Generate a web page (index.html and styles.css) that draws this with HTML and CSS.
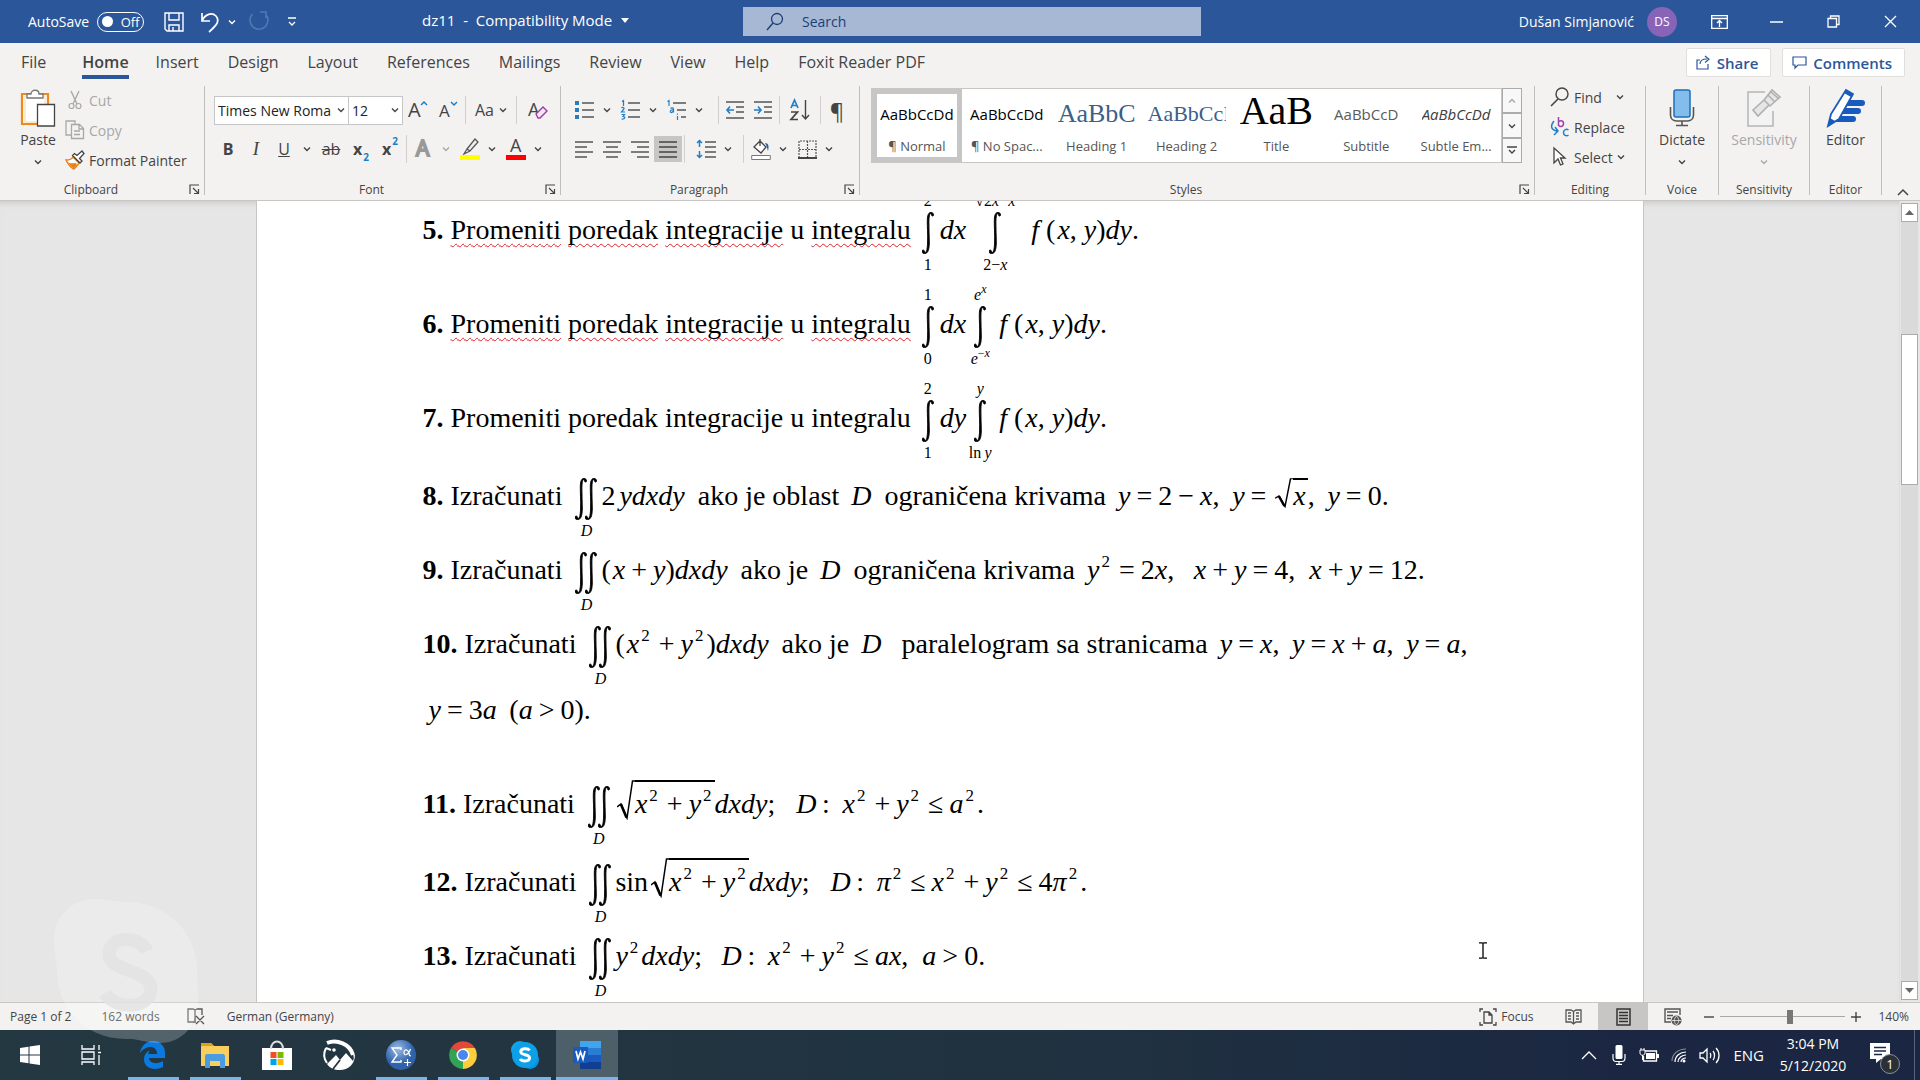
FILE: index.html
```html
<!DOCTYPE html>
<html lang="en">
<head>
<meta charset="utf-8">
<title>dz11 - Compatibility Mode - Word</title>
<link rel="stylesheet" href="styles.css">
</head>
<body>
<svg class="defs" aria-hidden="true">
  <symbol id="chev" viewBox="0 0 8 8"><path d="M1 2.500l3 3 3-3" fill="none" stroke="currentColor" stroke-width="1.400"/></symbol>
  <symbol id="launch" viewBox="0 0 11 11"><path d="M1 10V1h9M4 4l5 5M9.500 5v4.500H5" fill="none" stroke="currentColor" stroke-width="1.200"/></symbol>
  <symbol id="int" viewBox="0 0 12 42"><path d="M11.500 3.200C11.500 1.200 10.500.400 9 .400 6.500.400 5.400 3 5.300 8.500 5.200 15 5.900 22 5.600 30c-.2 6-.8 10.500-2.400 10.500-.7 0-.5-2.500-2-2.500-1 0-1.200.8-1.200 1.600 0 1.400 1.200 2 2.600 2 3.200 0 4.600-3.600 4.700-10.600C7.400 24 6.700 17 6.900 10 7 4.500 7.600 1.400 8.800 1.400c.7 0 .4 2.600 1.700 2.600.6 0 1-.3 1-.8z" stroke="#000" stroke-width=".9"/></symbol>
  <symbol id="iint" viewBox="0 0 22 42"><use href="#int" width="12" height="42"/><use href="#int" x="10" width="12" height="42"/></symbol>
  <symbol id="root" viewBox="0 0 18 40" preserveAspectRatio="none"><path d="M0 27l4-3 6 14L15.500 1H18" fill="none" stroke="#000" stroke-width="1.500"/><path d="M4 24.500l5.500 13" stroke="#000" stroke-width="2.600"/></symbol>
</svg>

<div class="app">
<header class="titlebar">
  <div class="quick">
    <label class="autosave">AutoSave <button class="toggle" aria-label="AutoSave off"><span class="knob"></span>Off</button></label>
    <button class="tb save" aria-label="Save"><svg width="20" height="20" viewBox="0 0 20 20"><path d="M1 1h18v18H3l-2-2zM5 1v7h10V1M5 19v-6h10v6M9 15v4" fill="none" stroke="#fff" stroke-width="1.400"/></svg></button>
    <button class="tb undo" aria-label="Undo"><svg width="20" height="22" viewBox="0 0 20 22"><path d="M2 2v8h8M2 10C5 3 12 1 16 5c4 5 1 9-7 16" fill="none" stroke="#fff" stroke-width="1.700"/></svg><svg class="c8"><use href="#chev"/></svg></button>
    <button class="tb redo" aria-label="Repeat"><svg width="22" height="22" viewBox="0 0 22 22"><path d="M13 1h6v6M18.500 3a9 9 0 1 1-13 0" fill="none" stroke="#5078b4" stroke-width="1.600"/></svg></button>
    <button class="tb" aria-label="Customize"><svg width="10" height="10" viewBox="0 0 10 10"><path d="M1 1h8M2 5l3 3 3-3" fill="none" stroke="#fff" stroke-width="1.300"/></svg></button>
  </div>
  <div class="doctitle"><span>dz11&nbsp; -&nbsp; Compatibility Mode</span><svg width="8" height="5" viewBox="0 0 8 5"><path d="M0 0h8L4 5z" fill="#fff"/></svg></div>
  <label class="search"><svg width="18" height="20" viewBox="0 0 18 20"><circle cx="11" cy="7" r="5.500" fill="none" stroke="#1d3f77" stroke-width="1.300"/><path d="M7 11L1 18" stroke="#1d3f77" stroke-width="1.400"/></svg><input type="text" placeholder="Search" aria-label="Search"></label>
  <div class="account">
    <span>Dušan Simjanović</span><span class="avatar">DS</span>
    <button class="win" aria-label="Ribbon display"><svg width="17" height="14" viewBox="0 0 17 14"><path d="M.7.700h15.600v12.600H.7zM.7 3.500h15.600M8.500 12V6M6 8l2.500-2.500L11 8" fill="none" stroke="#fff" stroke-width="1.300"/></svg></button>
    <button class="win" aria-label="Minimize"><svg width="13" height="2"><path d="M0 1h13" stroke="#fff" stroke-width="1.500"/></svg></button>
    <button class="win" aria-label="Restore"><svg width="13" height="13" viewBox="0 0 13 13"><path d="M1 3.500h8.500V12H1zM3.500 3.500V1H12v8.500H9.500" fill="none" stroke="#fff" stroke-width="1.300"/></svg></button>
    <button class="win" aria-label="Close"><svg width="13" height="13" viewBox="0 0 13 13"><path d="M1 1l11 11M12 1L1 12" stroke="#fff" stroke-width="1.300"/></svg></button>
  </div>
</header>

<nav class="tabs">
  <a href="#">File</a><a href="#" class="on">Home</a><a href="#">Insert</a><a href="#">Design</a><a href="#">Layout</a><a href="#">References</a><a href="#">Mailings</a><a href="#">Review</a><a href="#">View</a><a href="#">Help</a><a href="#">Foxit Reader PDF</a>
  <div class="actions">
    <button><svg width="15" height="15" viewBox="0 0 15 15"><path d="M4 5H1v9h11V9M4 9c0-4 3-5 7-5M9 1l4 3.200L9 7.500" fill="none" stroke="#2b579a" stroke-width="1.200"/></svg>Share</button>
    <button><svg width="15" height="13" viewBox="0 0 15 13"><path d="M1 1h13v8H6l-3 3V9H1z" fill="none" stroke="#2b579a" stroke-width="1.200"/></svg>Comments</button>
  </div>
</nav>

<section class="ribbon">
  <div class="group">
    <div class="body clip">
      <button class="big paste"><svg width="36" height="38" viewBox="0 0 36 38"><path d="M2 5h26v30H2z" fill="#fafafa" stroke="#ee8a1d" stroke-width="2.200"/><path d="M5 7h20v26H5z" fill="#fff" stroke="#fbd9a0"/><path d="M7 9V5h4c0-5 8-5 8 0h4v4z" fill="#fff" stroke="#777" stroke-width="1.300"/><path d="M17.500 15.500h17V37h-17z" fill="#fff" stroke="#444" stroke-width="1.300"/></svg><span>Paste</span><svg class="c8"><use href="#chev"/></svg></button>
      <div class="stack">
        <button class="dim"><svg width="20" height="20" viewBox="0 0 20 20"><path d="M6 1l6 13M14 1L8 14" stroke="#a8a8a8" stroke-width="1.400"/><circle cx="6.500" cy="16" r="2.500" fill="none" stroke="#a8a8a8" stroke-width="1.200"/><circle cx="13.500" cy="16" r="2.500" fill="none" stroke="#a8a8a8" stroke-width="1.200"/></svg>Cut</button>
        <button class="dim"><svg width="20" height="20" viewBox="0 0 20 20"><path d="M6 15H1V1h9v3M6.500 4.500h8l4 4v10h-12zM14 5v4h4M9 11h6M9 14.500h6" fill="none" stroke="#a8a8a8" stroke-width="1.300"/></svg>Copy</button>
        <button><svg width="20" height="20" viewBox="0 0 20 20"><path d="M1 10c3 0 6-1 7-3l6 6c-1 2-3 4-5 6-3-1-6-5-8-9z" fill="#fff" stroke="#e8811a" stroke-width="1.500"/><path d="M3 12.500c3 1 5 1 8 .5l1 2-3 3.500c-2-1-4-3-6-6z" fill="#e8811a"/><path d="M7.500 5.500l7.500 7.500 2-2-2.500-2.500L19 3.500 17 1l-5 4.500-2.500-2z" fill="#fff" stroke="#444" stroke-width="1.300"/></svg>Format Painter</button>
      </div>
    </div>
    <div class="cap has-la">Clipboard<svg class="la"><use href="#launch"/></svg></div>
  </div>

  <div class="group">
    <div class="body rows">
      <div class="row">
        <div class="combo fontname"><input value="Times New Roma" aria-label="Font"><svg class="c8"><use href="#chev"/></svg></div>
        <div class="combo fontsize"><input value="12" aria-label="Font size"><svg class="c8"><use href="#chev"/></svg></div>
        <button class="cell w30" aria-label="Grow font"><svg width="20" height="20" viewBox="0 0 20 20"><text x="0" y="17" font-size="20">A</text><path d="M13 5l3-3 3 3" fill="none" stroke="#1e7fc8" stroke-width="1.500"/></svg></button>
        <button class="cell w30" aria-label="Shrink font"><svg width="20" height="20" viewBox="0 0 20 20"><text x="1" y="17" font-size="17">A</text><path d="M13 2l3 3 3-3" fill="none" stroke="#1e7fc8" stroke-width="1.500"/></svg></button>
        <span class="vs"></span>
        <button class="cell w46 case">Aa<svg class="c8"><use href="#chev"/></svg></button>
        <span class="vs"></span>
        <button class="cell w38" aria-label="Clear formatting"><svg width="22" height="22" viewBox="0 0 22 22"><text x="1" y="17" font-size="18">A</text><path d="M9 15l7-7 4 4-7 7h-2z" fill="#f7e6f7" stroke="#9a3d9e" stroke-width="1.400"/></svg></button>
      </div>
      <div class="row r2">
        <button class="cell w28"><b>B</b></button><button class="cell w28 it">I</button><button class="cell w28"><u>U</u></button><button class="cell w18" aria-label="Underline style"><svg class="c8"><use href="#chev"/></svg></button>
        <button class="cell w30"><s>ab</s></button><button class="cell w30 script"><b>x</b><sub>2</sub></button><button class="cell w28 script"><b>x</b><sup>2</sup></button>
        <span class="vs"></span>
        <button class="cell w46 dim" aria-label="Text effects"><svg width="20" height="22" viewBox="0 0 20 22"><text class="hollow" x="2" y="18" font-size="21">A</text></svg><svg class="c8"><use href="#chev"/></svg></button>
        <button class="cell w46" aria-label="Highlight"><svg width="20" height="24" viewBox="0 0 20 24"><path d="M7 12L15 2l3 3-8 9zM7 12l-3 5 6-3" fill="#eee" stroke="#555" stroke-width="1.300"/><path d="M0 18h20v5H0z" fill="#ff0"/></svg><svg class="c8"><use href="#chev"/></svg></button>
        <button class="cell w46" aria-label="Font color"><svg width="20" height="24" viewBox="0 0 20 24"><text x="4" y="15" font-size="18">A</text><path d="M0 18h20v5H0z" fill="red"/></svg><svg class="c8"><use href="#chev"/></svg></button>
      </div>
    </div>
    <div class="cap has-la">Font<svg class="la"><use href="#launch"/></svg></div>
  </div>

  <div class="group">
    <div class="body rows">
      <div class="row">
        <button class="cell w46" aria-label="Bullets"><svg width="20" height="20" viewBox="0 0 20 20"><path d="M7 3h12M7 10h12M7 17h12" stroke="#555" stroke-width="1.500"/><path d="M0 1h4v4H0zM0 8h4v4H0zM0 15h4v4H0z" fill="#2b7cb8"/></svg><svg class="c8"><use href="#chev"/></svg></button>
        <button class="cell w46" aria-label="Numbering"><svg width="20" height="20" viewBox="0 0 20 20"><path d="M7 3h12M7 10h12M7 17h12" stroke="#555" stroke-width="1.500"/><path d="M1 1.500L2.500.500V6M.5 8c1-1 3-.5 2.500 1L.5 12H4M.5 14.500h3L2 16.500c3 0 2 3-1.500 2.500" fill="none" stroke="#1e7fc8" stroke-width="1.200"/></svg><svg class="c8"><use href="#chev"/></svg></button>
        <button class="cell w54 left" aria-label="Multilevel list"><svg width="20" height="20" viewBox="0 0 20 20"><path d="M6 3h13M10 10h9M14 17h5" stroke="#555" stroke-width="1.500"/><path d="M.5 1.500L2 .500V6M3.500 8.500c1-1 3-.7 3 .5v3.500M6.500 10c-4-.5-4 3-1.500 2.500L6.500 11M10.500 16v4M10.500 13.500v1.300" fill="none" stroke="#1e7fc8" stroke-width="1.200"/></svg><svg class="c8"><use href="#chev"/></svg></button>
        <span class="vs"></span>
        <button class="cell w28" aria-label="Decrease indent"><svg width="18" height="18" viewBox="0 0 18 18"><path d="M0 1h18M10 6h8M10 11h8M0 17h18" stroke="#555" stroke-width="1.500"/><path d="M8 9H1M4 5.500L1 9l3 3.500" fill="none" stroke="#1e7fc8" stroke-width="1.600"/></svg></button>
        <button class="cell w28" aria-label="Increase indent"><svg width="18" height="18" viewBox="0 0 18 18"><path d="M0 1h18M10 6h8M10 11h8M0 17h18" stroke="#555" stroke-width="1.500"/><path d="M0 9h7M4 5.500L7 9l-3 3.500" fill="none" stroke="#1e7fc8" stroke-width="1.600"/></svg></button>
        <span class="vs"></span>
        <button class="cell w36" aria-label="Sort"><svg width="20" height="22" viewBox="0 0 20 22"><path d="M1 9L4.500 1 8 9M2 6.500h5" fill="none" stroke="#1e7fc8" stroke-width="1.700"/><path d="M1 13h6.500L1 20.500h7" fill="none" stroke="#444" stroke-width="1.700"/><path d="M15.500 1v19M12 16l3.500 4 3.500-4" fill="none" stroke="#444" stroke-width="1.400"/></svg></button>
        <span class="vs"></span>
        <button class="cell w28 pil">¶</button>
      </div>
      <div class="row r2">
        <button class="cell w28" aria-label="Align left"><svg width="18" height="17" viewBox="0 0 18 17"><path d="M0 1h18M0 6h12M0 11h18M0 16h12" stroke="#555" stroke-width="1.500"/></svg></button>
        <button class="cell w28" aria-label="Center"><svg width="18" height="17" viewBox="0 0 18 17"><path d="M0 1h18M3 6h12M0 11h18M3 16h12" stroke="#555" stroke-width="1.500"/></svg></button>
        <button class="cell w28" aria-label="Align right"><svg width="18" height="17" viewBox="0 0 18 17"><path d="M0 1h18M6 6h12M0 11h18M6 16h12" stroke="#555" stroke-width="1.500"/></svg></button>
        <button class="cell w28 pressed" aria-label="Justify"><svg width="18" height="17" viewBox="0 0 18 17"><path d="M0 1h18M0 6h18M0 11h18M0 16h18" stroke="#444" stroke-width="1.500"/></svg></button>
        <span class="vs"></span>
        <button class="cell w54" aria-label="Line spacing"><svg width="20" height="18" viewBox="0 0 20 18"><path d="M9 2h11M9 7h11M9 12h11M9 17h11" stroke="#555" stroke-width="1.500"/><path d="M3.500 0v7M1 3l2.500-2.500L6 3M3.500 11v7M1 15l2.500 2.500L6 15" fill="none" stroke="#1e7fc8" stroke-width="1.500"/></svg><svg class="c8"><use href="#chev"/></svg></button>
        <span class="vs"></span>
        <button class="cell w46" aria-label="Shading"><svg width="20" height="22" viewBox="0 0 20 22"><path d="M3 9l6-6 6 6-5 6zM9 8V1" fill="#fff" stroke="#444" stroke-width="1.300"/><path d="M14 5c4 0 4 4 3 8-1-3-1-5-3-8z" fill="#1e5f9e"/><path d="M.7 17.500h18.600v4H.7z" fill="#fff" stroke="#777"/></svg><svg class="c8"><use href="#chev"/></svg></button>
        <button class="cell w46" aria-label="Borders"><svg width="19" height="19" viewBox="0 0 19 19"><path d="M1 18V1h17v17M9.500 1v17M1 9.500h17" fill="none" stroke="#555" stroke-width="1.200" stroke-dasharray="2 1"/><path d="M0 18h19" stroke="#333" stroke-width="1.800"/></svg><svg class="c8"><use href="#chev"/></svg></button>
      </div>
    </div>
    <div class="cap has-la">Paragraph<svg class="la"><use href="#launch"/></svg></div>
  </div>

  <div class="group">
    <div class="body gal">
      <div class="gallery">
        <button class="style sel"><span class="s16">AaBbCcDd</span><small>¶ Normal</small></button>
        <button class="style"><span class="s16">AaBbCcDd</span><small>¶ No Spac...</small></button>
        <button class="style"><span class="s24">AaBbC</span><small>Heading 1</small></button>
        <button class="style"><span class="s20">AaBbCcI</span><small>Heading 2</small></button>
        <button class="style"><span class="s36">AaB</span><small>Title</small></button>
        <button class="style"><span class="sub">AaBbCcD</span><small>Subtitle</small></button>
        <button class="style"><span class="em">AaBbCcDd</span><small>Subtle Em...</small></button>
      </div>
      <div class="spin"><button class="dim" aria-label="Up"><svg class="c8 up"><use href="#chev"/></svg></button><button aria-label="Down"><svg class="c8"><use href="#chev"/></svg></button><button aria-label="More"><svg width="10" height="9" viewBox="0 0 10 9"><path d="M0 1h10M2 4l3 3 3-3" fill="none" stroke="#444" stroke-width="1.400"/></svg></button></div>
    </div>
    <div class="cap has-la">Styles<svg class="la"><use href="#launch"/></svg></div>
  </div>

  <div class="group">
    <div class="body stack edit">
      <button><svg width="20" height="20" viewBox="0 0 20 20"><circle cx="12" cy="7" r="6" fill="none" stroke="#444" stroke-width="1.400"/><path d="M8 12L1 19" stroke="#444" stroke-width="1.600"/></svg>Find<svg class="c8 far"><use href="#chev"/></svg></button>
      <button><svg width="20" height="20" viewBox="0 0 20 20"><path d="M8.500 0v9M8.500 5c1-2 5-2 5 1.500s-4 4-5 1.500" fill="none" stroke="#a03fa8" stroke-width="1.500"/><path d="M18.500 13c-2-1.500-5-.5-5 2.500s3 4 5 2.500M4 4c-4 5-3 9 3 10M5 10l3 4-4 4" fill="none" stroke="#1e7fc8" stroke-width="1.500"/></svg>Replace</button>
      <button><svg width="20" height="20" viewBox="0 0 20 20"><path d="M4 1v15l4-4 2.500 6 2.500-1-2.500-6H15z" fill="#fff" stroke="#444" stroke-width="1.300"/></svg>Select<svg class="c8"><use href="#chev"/></svg></button>
    </div>
    <div class="cap">Editing</div>
  </div>
  <div class="group">
    <div class="body"><button class="big"><svg width="26" height="38" viewBox="0 0 26 38"><rect x="5" y="1" width="16" height="27" rx="2" fill="#83bdee" stroke="#1e6fb8" stroke-width="1.500"/><path d="M1.500 18v8c0 4 3 6 6 6h11c3 0 6-2 6-6v-8M13 32v4M7 36.500h12" fill="none" stroke="#555" stroke-width="1.600"/></svg><span>Dictate</span><svg class="c8"><use href="#chev"/></svg></button></div>
    <div class="cap">Voice</div>
  </div>
  <div class="group">
    <div class="body"><button class="big dim"><svg width="34" height="38" viewBox="0 0 34 38"><path d="M18 3H1v34h25V22" fill="#f3f3f3" stroke="#b5b5b5" stroke-width="1.500"/><path d="M6 21L17 11l5 5-11 11zM17 11l8-10 8 7-10 9zM21 6l7 7M24 3l8 7" fill="#e6e6e6" stroke="#b0b0b0" stroke-width="1.600"/></svg><span>Sensitivity</span><svg class="c8"><use href="#chev"/></svg></button></div>
    <div class="cap">Sensitivity</div>
  </div>
  <div class="group">
    <div class="body"><button class="big"><svg width="40" height="38" viewBox="0 0 40 38"><path d="M22 11h14a2 2 0 0 1 0 6H20zM18 19h14a2 2 0 0 1 0 6H14zM13 27h14a2 2 0 0 1 0 6H8z" fill="#185abd"/><path d="M2 37l3-12L20 1l7 4-14 25z" fill="#fff" stroke="#185abd" stroke-width="1.800"/><path d="M2 37l2-8 5 3zM18 4l7 4 2-3-7-4z" fill="#185abd"/></svg><span>Editor</span></button></div>
    <div class="cap">Editor</div>
  </div>
  <div class="fold"><button aria-label="Collapse the ribbon"><svg width="12" height="8" viewBox="0 0 12 8"><path d="M1 7l5-5 5 5" fill="none" stroke="#444" stroke-width="1.500"/></svg></button></div>
</section>

<main class="work">
  <div class="canvas">
    <article class="page">
      <p><b>5.</b>&nbsp;<span><u class="sp">Promeniti</u> <u class="sp">poredak</u> <u class="sp">integracije</u> u <u class="sp">integralu</u></span>
        <span class="int first"><small>2</small><svg width="12" height="42"><use href="#int"/></svg><small>1</small></span><i>dx</i><span class="int wide"><small>√2<i>x</i>−<i>x</i></small><svg width="12" height="42"><use href="#int"/></svg><small>2−<i>x</i></small></span><span class="eq"><i>f</i> (<i class="arg">x</i>, <i>y</i>)<i>dy</i>.</span></p>
      <p class="lg"><b>6.</b>&nbsp;<span><u class="sp">Promeniti</u> <u class="sp">poredak</u> <u class="sp">integracije</u> u <u class="sp">integralu</u></span>
        <span class="int first"><small>1</small><svg width="12" height="42"><use href="#int"/></svg><small>0</small></span><i>dx</i><span class="int"><small><i>e<sup>x</sup></i></small><svg width="12" height="42"><use href="#int"/></svg><small><i>e</i><sup>−<i>x</i></sup></small></span><span class="eq"><i>f</i> (<i class="arg">x</i>, <i>y</i>)<i>dy</i>.</span></p>
      <p class="lg"><b>7.</b>&nbsp;<span>Promeniti poredak integracije u integralu</span>
        <span class="int first"><small>2</small><svg width="12" height="42"><use href="#int"/></svg><small>1</small></span><i>dy</i><span class="int"><small><i>y</i></small><svg width="12" height="42"><use href="#int"/></svg><small>ln&thinsp;<i>y</i></small></span><span class="eq"><i>f</i> (<i class="arg">x</i>, <i>y</i>)<i>dy</i>.</span></p>
      <p class="md"><b>8.</b>&nbsp;<span>Izračunati</span>
        <span class="int dbl"><small></small><svg width="22" height="42"><use href="#iint"/></svg><small><i>D</i></small></span><span class="eq">2<i class="k">ydxdy</i></span><span class="tx">ako je oblast</span><i class="eq">D</i><span class="tx">ograničena krivama</span><span class="eq"><i>y</i><span class="op">=</span>2<span class="op">−</span><i>x</i>,&thinsp; <i>y</i><span class="op">=</span><span class="sqrt short"><svg width="18" height="30"><use href="#root"/></svg><span><i>x</i></span></span>,&thinsp; <i>y</i><span class="op">=</span>0.</span></p>
      <p class="sm"><b>9.</b>&nbsp;<span>Izračunati</span>
        <span class="int dbl"><small></small><svg width="22" height="42"><use href="#iint"/></svg><small><i>D</i></small></span><span class="eq">(<i class="arg">x</i><span class="op">+</span><i>y</i>)<i>dxdy</i></span><span class="tx">ako je</span><i class="eq">D</i><span class="tx">ograničena krivama</span><span class="eq"><i>y</i><sup>2</sup><span class="op">=</span>2<i>x</i>,&nbsp;&thinsp; <i>x</i><span class="op">+</span><i>y</i><span class="op">=</span>4,&nbsp; <i>x</i><span class="op">+</span><i>y</i><span class="op">=</span>12.</span></p>
      <p class="sm"><b>10.</b>&nbsp;<span>Izračunati</span>
        <span class="int dbl"><small></small><svg width="22" height="42"><use href="#iint"/></svg><small><i>D</i></small></span><span class="eq">(<i class="arg">x</i><sup>2</sup><span class="op">+</span><i>y</i><sup>2</sup>)<i>dxdy</i></span><span class="tx">ako je</span><i class="eq">D</i><span class="tx">&nbsp;paralelogram sa stranicama</span><span class="eq"><i>y</i><span class="op">=</span><i>x</i>,&thinsp; <i>y</i><span class="op">=</span><i>x</i><span class="op">+</span><i>a</i>,&thinsp; <i>y</i><span class="op">=</span><i>a</i>,</span></p>
      <p><span class="eq"><i>y</i><span class="op">=</span>3<i>a</i>&thinsp; (<i>a</i><span class="op">&gt;</span>0).</span></p>
      <p class="lg"><b>11.</b>&nbsp;<span>Izračunati</span>
        <span class="int dbl"><small></small><svg width="22" height="42"><use href="#iint"/></svg><small><i>D</i></small></span><span class="eq"><span class="sqrt"><svg width="18" height="40"><use href="#root"/></svg><span><i>x</i><sup>2</sup><span class="op">+</span><i>y</i><sup>2</sup></span></span><i>dxdy</i>;&nbsp;&nbsp; <i>D</i>&thinsp;:&thinsp; <i>x</i><sup>2</sup><span class="op">+</span><i>y</i><sup>2</sup><span class="op">≤</span><i>a</i><sup>2</sup>.</span></p>
      <p class="md"><b>12.</b>&nbsp;<span>Izračunati</span>
        <span class="int dbl"><small></small><svg width="22" height="42"><use href="#iint"/></svg><small><i>D</i></small></span><span class="eq">sin<span class="sqrt"><svg width="18" height="40"><use href="#root"/></svg><span><i>x</i><sup>2</sup><span class="op">+</span><i>y</i><sup>2</sup></span></span><i>dxdy</i>;&nbsp;&nbsp; <i>D</i>&thinsp;:&thinsp; <i>π</i><sup>2</sup><span class="op">≤</span><i>x</i><sup>2</sup><span class="op">+</span><i>y</i><sup>2</sup><span class="op">≤</span>4<i>π</i><sup>2</sup>.</span></p>
      <p class="sm"><b>13.</b>&nbsp;<span>Izračunati</span>
        <span class="int dbl"><small></small><svg width="22" height="42"><use href="#iint"/></svg><small><i>D</i></small></span><span class="eq"><i>y</i><sup>2</sup><i>dxdy</i>;&nbsp;&thinsp; <i>D</i>&thinsp;:&thinsp; <i>x</i><sup>2</sup><span class="op">+</span><i>y</i><sup>2</sup><span class="op">≤</span><i>ax</i>,&nbsp; <i>a</i><span class="op">&gt;</span>0.</span></p>
    </article>
  </div>
  <div class="scroll"><button aria-label="Scroll up"><svg width="9" height="5"><path d="M0 5h9L4.500 0z" fill="#666"/></svg></button><div class="track"><div class="thumb"></div></div><button aria-label="Scroll down"><svg width="9" height="5"><path d="M0 0h9L4.500 5z" fill="#666"/></svg></button></div>
  <svg class="ibeam" width="8" height="17" viewBox="0 0 8 17"><path d="M0 .800h3l1 .7 1-.7h3M4 1v15M0 16.200h3l1-.7 1 .7h3" fill="none" stroke="#000" stroke-width="1.300"/></svg>
</main>

<footer class="status">
  <span class="pg">Page 1 of 2</span><span class="wc">162 words</span><svg class="proof" width="18" height="17" viewBox="0 0 18 17"><path d="M7 14H1V1h5l2 1v13M8 2l2-1h5v6M9 8l8 8M17 8l-8 8" fill="none" stroke="#555" stroke-width="1.300"/></svg><span>German (Germany)</span>
  <div class="views">
    <button class="focus"><svg width="18" height="18" viewBox="0 0 18 18"><path d="M1 4V1h3M14 1h3v3M1 14v3h3M14 17h3v-3M5 4h5l3 3v8H5zM10 4v3h3" fill="none" stroke="#444" stroke-width="1.300"/></svg>Focus</button>
    <button class="view" aria-label="Read mode"><svg width="17" height="16" viewBox="0 0 17 16"><path d="M1 1h5l2.500 1.500L11 1h5v12h-5l-2.500 2L6 13H1zM8.500 2v12M3 4h3M3 7h3M3 10h3M11 4h3M11 7h3M11 10h3" fill="none" stroke="#555" stroke-width="1.300"/></svg></button>
    <button class="view pressed" aria-label="Print layout"><svg width="15" height="18" viewBox="0 0 15 18"><path d="M1 1h13v16H1zM3 4.500h9M3 7.500h9M3 10.500h9M3 13.500h9" fill="none" stroke="#333" stroke-width="1.500"/></svg></button>
    <button class="view" aria-label="Web layout"><svg width="18" height="18" viewBox="0 0 18 18"><path d="M7 14H1V1h15v6M3 4h11M3 7.500h6M3 10.500h4" fill="none" stroke="#555" stroke-width="1.400"/><circle cx="12.500" cy="12.500" r="5" fill="#555"/><path d="M8 12.500h9M12.500 8c-3 3-3 6 0 9M12.500 8c3 3 3 6 0 9" fill="none" stroke="#eee" stroke-width=".8"/></svg></button>
    <button class="zb" aria-label="Zoom out"><svg width="10" height="10"><path d="M0 5h10" stroke="#444" stroke-width="1.400"/></svg></button>
    <input class="zoom" type="range" min="0" max="100" value="56" aria-label="Zoom">
    <button class="zb" aria-label="Zoom in"><svg width="10" height="10"><path d="M0 5h10M5 0v10" stroke="#444" stroke-width="1.400"/></svg></button>
    <span class="pct">140%</span>
  </div>
</footer>

<nav class="taskbar">
  <button class="task lead" aria-label="Start"><svg width="20" height="20" viewBox="0 0 20 20"><path d="M0 3l8.500-1.200v7.700H0zM9.500 1.600L20 0v9.500H9.500zM0 10.500h8.500v7.700L0 17zM9.500 10.500H20V20L9.500 18.400z" fill="#fff"/></svg></button>
  <button class="task" aria-label="Task view"><svg width="20" height="20" viewBox="0 0 20 20"><path d="M1 0v4h12V0M1 7h12v7H1zM1 20v-3h12v3M18 0v5M18 10v10M17 7.500h3" fill="none" stroke="#fff" stroke-width="1.300"/></svg></button>
  <button class="task run" aria-label="Edge"><svg width="26" height="28" viewBox="0 0 26 28"><path d="M0 12C1 5 6 0 13 0c8 0 13 6 12 15v2H9c0 5 8 7 14 3v6C15 30 4 28 4 18c0-4 2-7 6-9-1 1-1.500 2-1.700 4H17c0-9-11-9-17-1z" fill="#0a7ae0"/></svg></button>
  <button class="task run" aria-label="File Explorer"><svg width="28" height="26" viewBox="0 0 28 26"><path d="M0 1h10l3 3h15v20H0z" fill="#f8ce5c"/><path d="M0 1h10l3 3H0z" fill="#d9a11e"/><path d="M4 26V14c0-1 1-2 2-2h16c1 0 2 1 2 2v12h-5v-7H9v7z" fill="#4a9be0"/></svg></button>
  <button class="task" aria-label="Store"><svg width="30" height="30" viewBox="0 0 30 30"><path d="M0 8h30v22H0z" fill="#fff"/><path d="M9 9C9-1 21-1 21 9" fill="none" stroke="#ddd" stroke-width="2"/><path d="M8.500 12h6v6h-6z" fill="#f04e23"/><path d="M15.500 12h6v6h-6z" fill="#7fb801"/><path d="M8.500 19h6v6h-6z" fill="#00a3ee"/><path d="M15.500 19h6v6h-6z" fill="#fdb900"/></svg></button>
  <button class="task" aria-label="Photos"><svg width="32" height="30" viewBox="0 0 32 30"><path d="M4 3C14-1 27 4 30 15" fill="none" stroke="#fff" stroke-width="4"/><path d="M32 15c0 9-7 15-15 15C11 30 7 28 4 24l9-9 4 5 6-7 7 8c1-2 1-4 0-7z" fill="#fff"/><path d="M3 8c-3 6-2 11 1 15M3 8l5 2" fill="none" stroke="#fff" stroke-width="2"/><circle cx="11" cy="10" r="1.800" fill="#fff"/><path d="M17 20l-7 9" stroke="#23363f" stroke-width="1.800"/></svg></button>
  <button class="task run" aria-label="MathType"><svg width="30" height="30" viewBox="0 0 30 30"><defs><radialGradient id="mt" cx=".4" cy=".3"><stop offset="0" stop-color="#9dbbe6"/><stop offset="1" stop-color="#2f62ab"/></radialGradient></defs><circle cx="15" cy="15" r="15" fill="url(#mt)"/><path d="M15 10V8H6l5 7-5 7h9v-2" fill="none" stroke="#fff" stroke-width="1.400"/><path d="M24.500 9c-2 6-6.500 7.500-6.500 3.500s4.500-4 5.500 3l1.500.5M21.500 19v7M18 22.500h7" fill="none" stroke="#fff" stroke-width="1.200"/></svg></button>
  <button class="task run" aria-label="Chrome"><svg width="28" height="28" viewBox="0 0 28 28"><path d="M14 14L2 7a14 14 0 0 1 24 0z" fill="#e0493c"/><path d="M14 14L26 7a14 14 0 0 1-12 21z" fill="#fccd3d"/><path d="M14 14v14A14 14 0 0 1 2 7z" fill="#31a352"/><path d="M14 7h12l-6 8z" fill="#fccd3d"/><circle cx="14" cy="14" r="6.500" fill="#fff"/><circle cx="14" cy="14" r="5" fill="#4a86ee"/></svg></button>
  <button class="task run" aria-label="Skype"><svg width="28" height="28" viewBox="0 0 28 28"><circle cx="9" cy="9" r="9" fill="#0ea5ea"/><circle cx="19" cy="19" r="9" fill="#0b93de"/><circle cx="14" cy="14" r="13" fill="#0d9fe8"/><path d="M18.500 9.500C17 7 9.500 7 9.800 11c.3 3.500 9 2 8.800 6-.2 4-8 3.600-9.400.8" fill="none" stroke="#fff" stroke-width="3"/></svg></button>
  <button class="task on" aria-label="Word"><svg width="28" height="28" viewBox="0 0 28 28"><path d="M7 0h21v7H7z" fill="#41a5ee"/><path d="M7 7h21v7H7z" fill="#2b7cd3"/><path d="M7 14h21v7H7z" fill="#185abd"/><path d="M7 21h21v7H7z" fill="#103f91"/><path d="M0 6h15v16H0z" fill="#185abd"/><path d="M3 10l2 8 2.500-7L10 18l2-8" fill="none" stroke="#fff" stroke-width="1.700"/></svg></button>
  <div class="tray">
    <button aria-label="Hidden icons"><svg width="16" height="9" viewBox="0 0 16 9"><path d="M1 8l7-7 7 7" fill="none" stroke="#fff" stroke-width="1.300"/></svg></button>
    <button aria-label="Microphone"><svg width="14" height="20" viewBox="0 0 14 20"><rect x="3.500" width="7" height="14" rx="1.500" fill="#fff"/><path d="M1 9v4c0 2 1 3.500 3 3.500h6c2 0 3-1.500 3-3.500V9M7 16v3.500M4 19.400h6" fill="none" stroke="#fff" stroke-width="1.200"/></svg></button>
    <button aria-label="Battery"><svg width="20" height="14" viewBox="0 0 20 14"><path d="M6 3h11.500v10H4.500V8" fill="none" stroke="#fff" stroke-width="1.300"/><path d="M7 5h9v6H7zM18 6h2v4h-2z" fill="#fff"/><path d="M1 2h5v3c0 3-5 3-5 0zM2 0v2M5 0v2M3.500 7v5" fill="none" stroke="#fff"/></svg></button>
    <button aria-label="Wi-Fi"><svg width="16" height="15" viewBox="0 0 16 15"><circle cx="13" cy="13" r="1.500" fill="#fff"/><path d="M1 13C1 6 7 1 15 1" fill="none" stroke="#889" stroke-width="1.200"/><path d="M4 14c0-6 5-10 11-10M7 14c0-4 4-7 8-7M10 14c0-2 2-4 5-4" fill="none" stroke="#fff" stroke-width="1.200"/></svg></button>
    <button aria-label="Volume"><svg width="21" height="17" viewBox="0 0 21 17"><path d="M1 6h3l4-4v13l-4-4H1zM11 6c1 1 1 4 0 5M14 4c2 2 2 7 0 9M17 1c4 4 4 11 0 15" fill="none" stroke="#fff" stroke-width="1.300"/></svg></button>
    <span class="lang">ENG</span>
    <div class="clock"><span>3:04 PM</span><span>5/12/2020</span></div>
    <button class="note" aria-label="Notifications"><svg width="22" height="22" viewBox="0 0 22 22"><path d="M0 0h20v16H11l-5 4v-4H0z" fill="#fff"/><path d="M4 4.500h12M4 8h12M4 11.500h8" stroke="#1c2842" stroke-width="1.300"/></svg><span class="badge">1</span></button>
    <span class="peek"></span>
  </div>
</nav>
<svg class="watermark" width="144" height="144" viewBox="0 0 144 144" aria-hidden="true"><path d="M41 0c14 0 18 3 32 3 38 0 70 29 70 69 0 8 1 14 1 30 0 24-16 42-38 42-16 0-18-4-33-4-42 0-70-30-70-68 0-10-3-16-3-30C0 17 18 0 41 0z" fill="#fff" fill-opacity=".22"/><path d="M93 52C86 36 54 36 55 56c2 18 42 14 42 34 0 20-36 22-46 4" fill="none" stroke="#e2e2e2" stroke-opacity=".8" stroke-width="13"/></svg>
</div>
</body>
</html>
```
FILE: styles.css
```css
* { box-sizing: border-box; }
html, body { height: 100%; }
body { margin: 0; font: 14px "Open Sans", "Noto Sans", sans-serif; color: #444; overflow: hidden; }
button { font: inherit; color: inherit; background: none; border: 0; padding: 0; display: inline-flex; align-items: center; justify-content: center; }
svg { display: block; flex: none; overflow: visible; }
svg text { fill: #444; }
svg .hollow { fill: #fff; stroke: #999; stroke-width: 2px; }
.defs { position: absolute; width: 0; height: 0; }
.c8 { width: 8px; height: 8px; }
.dim { color: #a8a8a8; }
.app { position: relative; height: 100vh; display: flex; flex-direction: column; background: #f3f2f1; }

/* title bar */
.titlebar { flex: none; height: 43px; background: #2b579a; color: #fff; display: grid; grid-template-columns: 422px 321px 458px 1fr; align-items: center; }
.quick { display: flex; align-items: center; padding-left: 28px; }
.autosave { display: flex; align-items: center; gap: 8px; }
.toggle { width: 47px; height: 20px; border: 1px solid #fff; border-radius: 10px; font-size: 13px; gap: 8px; }
.knob { width: 11px; height: 11px; border-radius: 50%; background: #fff; }
.tb { gap: 8px; }
.save { margin: 0 16px 0 20px; }
.redo { margin: 0 18px 0 11px; }
.doctitle { display: flex; align-items: center; gap: 9px; padding-bottom: 3px; font-size: 15px; }
.search { height: 29px; background: #a6b8d3; display: flex; align-items: center; padding-left: 23px; gap: 18px; }
.search input { border: 0; background: none; font: inherit; font-size: 14px; flex: 1; min-width: 0; padding: 0; }
.search input::placeholder { color: #1d3f77; opacity: 1; }
.account { display: flex; align-items: center; justify-content: flex-end; padding-right: 1px; }
.avatar { width: 30px; height: 30px; border-radius: 50%; background: #8764b8; display: grid; place-items: center; font-size: 12px; margin: 0 14px 0 13px; }
.win { width: 57px; height: 43px; }

/* tabs */
.tabs { flex: none; height: 43px; display: flex; align-items: center; padding: 0 15px 4px 21px; gap: 29px; font-size: 16px; }
.tabs a { color: #444; text-decoration: none; height: 33px; line-height: 32px; white-space: nowrap; }
.tabs .on { font-weight: 600; border-bottom: 4px solid #2b579a; margin: 0 -2px 0 7px; }
.actions { margin-left: auto; display: flex; gap: 11px; }
.actions button { height: 29px; background: #fff; border: 1px solid #e1dfdd; border-radius: 2px; padding: 0 12px 0 9px; gap: 6px; color: #2b579a; font-size: 15px; font-weight: 600; }

/* ribbon */
.ribbon { flex: none; height: 115px; display: grid; grid-template-columns: 205px 356px 299px 1fr 111px 73px 91px 72px 38px; border-bottom: 1px solid #c8c6c4; }
.group { display: flex; flex-direction: column; border-right: 1px solid #c0bfbe; height: 109px; }
.body { flex: 1; display: flex; justify-content: center; align-items: flex-start; padding-top: 3px; }
.cap { position: relative; height: 12px; line-height: 14px; font-size: 12px; text-align: center; }
.has-la { padding-right: 22px; }
.la { position: absolute; right: 4px; top: 1px; width: 11px; height: 11px; }
.big { flex-direction: column; height: 76px; justify-content: flex-start; }
.big span { line-height: 24px; margin-bottom: 6px; margin-top: 1px; }
.clip { justify-content: flex-start; padding: 0 0 0 20px; margin-top: -1px; }
.paste { width: 36px; margin: 4px 9px 0 0; }
.stack { display: flex; flex-direction: column; align-items: flex-start; }
.stack button { height: 30px; gap: 4px; }
.body.edit { align-items: flex-start; justify-content: flex-start; padding: 0 0 0 15px; margin-top: -4px; }
.far { margin-left: 10px; }
.body.rows { flex-direction: column; align-items: flex-start; justify-content: flex-start; padding: 8px 0 0 9px; gap: 7px; }
.row { display: flex; align-items: center; height: 32px; }
.cell { height: 26px; gap: 8px; font-size: 16px; }
.w18 { width: 18px; } .w28 { width: 28px; } .w30 { width: 30px; } .w36 { width: 36px; } .w38 { width: 38px; } .w46 { width: 46px; } .w54 { width: 54px; }
.left { justify-content: flex-start; padding-left: 5px; }
.vs { width: 1px; height: 28px; background: #d2d0ce; margin: 0 2px; }
.combo { height: 29px; background: #fff; border: 1px solid #c6c6c6; display: flex; align-items: center; padding: 0 3px; }
.combo input { border: 0; padding: 0; font: inherit; color: #222; flex: 1; min-width: 0; background: none; }
.fontname { width: 135px; }
.fontsize { width: 54px; border-left: 0; }
.case { gap: 5px; }
.script { gap: 1px; }
.cell sub, .cell sup { font-size: 10px; font-weight: bold; color: #1e7fc8; line-height: 1; align-self: flex-end; }
.cell sup { align-self: flex-start; }
.it { font-style: italic; font-family: "Liberation Serif", serif; font-size: 19px; }
.pressed { background: #c8c6c4; }
.pil { font-size: 22px; }
.gal { padding: 2px 12px 0 11px; }
.gallery { flex: 1; min-width: 0; height: 75px; background: #fff; border: 1px solid #c8c6c4; display: flex; overflow: hidden; }
.style { flex: 1 1 90px; min-width: 0; display: grid; grid-template-rows: 34px 22px; overflow: hidden; padding-top: 8px; color: #000; justify-items: center; align-items: center; align-content: start; white-space: nowrap; }
.style span { line-height: 34px; max-width: 78px; overflow: hidden; }
.style small { font-size: 13px; color: #555; line-height: 20px; margin-top: 7px; }
.sel { box-shadow: inset 0 0 0 5px #c6c6c6; }
.s16 { font-size: 15px; }
.s24, .s20 { font-family: "Liberation Serif", serif; font-size: 26px; color: #3c6088; }
.s20 { font-size: 22px; }
.style .s36 { font-family: "Liberation Serif", serif; font-size: 40px; height: 38px; line-height: 32px; }
.sub { font-size: 15px; color: #5a5a5a; }
.em { font-size: 15px; font-style: italic; color: #404040; }
.spin { width: 20px; height: 75px; display: grid; grid-template-rows: 1fr 1fr 1fr; }
.spin button { border: 1px solid #ababab; background: #f8f8f8; }
.up { transform: rotate(180deg); }
.fold { display: flex; align-items: flex-end; justify-content: center; padding: 0 0 4px 4px; }

/* document */
.work { position: relative; flex: 1; min-height: 0; display: flex; background: #e6e6e6; overflow: hidden; }
.canvas { flex: 1; min-width: 0; display: flex; justify-content: center; align-items: flex-start; box-shadow: inset 0 7px 6px -5px #c9c9c9; }
.page { width: 1388px; max-width: 100%; min-height: 100%; background: #fff; border: 1px solid #c6c6c6; border-width: 0 1px; padding-left: 166px; font: 28px/32px "Liberation Serif", serif; color: #000; }
.page p { display: flex; align-items: center; height: 66px; margin: 0; white-space: nowrap; }
.page p:first-child { margin-top: -4px; }
.page .lg { margin-top: 28px; }
.page .md { margin-top: 12px; }
.page .sm { margin-top: 8px; }
.sp { text-decoration: underline wavy #e0202a 1px; text-underline-offset: 4px; text-decoration-skip-ink: none; }
.int { display: grid; grid-template-rows: 20px 42px 20px; row-gap: 1px; width: 28px; justify-items: center; align-items: center; padding-top: 5px; }
.int small { font-size: 16px; line-height: 18px; }
.first { margin-left: 5px; width: 24px; }
.wide { width: 58px; margin-right: 2px; }
.dbl { margin: 0 -6px 0 8px; width: 32px; }
.eq { margin: 0 6px; height: 32px; }
.int + .eq { margin-left: 5px; }
.tx { margin: 0 6px 0 7px; }
.op { margin: 0 6px; }
.arg { margin-left: 2px; }
.page sup { font-size: 17px; line-height: 0; vertical-align: 12px; margin: 0 3px 0 2px; }
.page .int sup { font-size: 12px; vertical-align: 7px; margin: 0; }
.k { margin-left: 4px; }
.sqrt { display: inline-flex; margin: -14px 0 -14px 3px; align-items: flex-start; }
.sqrt > span { align-self: baseline; border-top: 2px solid #000; padding: 6px 0 0 0; }
.short > span { padding: 0 2px 0 0; }
.scroll { width: 21px; display: flex; flex-direction: column; padding: 2px 2px 2px 1px; border-left: 1px solid #dedede; }
.scroll button { height: 19px; background: #fff; border: 1px solid #ababab; }
.track { flex: 1; background: #dadada; padding-top: 112px; }
.thumb { height: 151px; background: #fff; border: 1px solid #ababab; }
.ibeam { position: absolute; left: 1479px; top: 741px; }

/* status bar */
.status { flex: none; height: 28px; background: #f3f2f1; border-top: 1px solid #c8c6c4; display: flex; align-items: center; padding: 0 11px 0 10px; font-size: 12px; }
.wc { margin: 0 27px 0 30px; }
.proof { margin-right: 22px; }
.views { margin-left: auto; display: flex; align-items: center; height: 100%; }
.focus { gap: 4px; margin-right: 15px; }
.view { width: 50px; height: 27px; }
.zb { width: 22px; height: 27px; }
.zoom { appearance: none; width: 125px; height: 16px; margin: 0; background: linear-gradient(#a8a8a8, #a8a8a8) center / 100% 1px no-repeat; }
.zoom::-webkit-slider-thumb { appearance: none; width: 6px; height: 14px; background: #777; }
.pct { margin-left: 11px; }

/* taskbar */
.taskbar { flex: none; height: 50px; display: flex; background: linear-gradient(90deg, #243842, #203240 55%, #1b2742 85%); color: #fff; }
.task { width: 62px; position: relative; }
.task.lead { width: 60px; }
.on.task { background: #4d5f68; box-shadow: inset 0 -3px #76b5ee; }
.run::after { content: ""; position: absolute; left: 6px; right: 5px; bottom: 0; height: 3px; background: #76b5ee; }
.tray { margin-left: auto; display: flex; align-items: center; }
.tray button { width: 30px; height: 50px; }
.lang { margin: 0 14px 0 9px; font-size: 15px; }
.clock { display: flex; flex-direction: column; align-items: center; line-height: 22px; width: 70px; }
.tray .note { position: relative; width: 32px; margin: 0 13px 0 21px; padding: 0 8px 2px 0; }
.badge { position: absolute; right: 1px; top: 24px; width: 20px; height: 20px; border: 1px solid #8b8f98; border-radius: 50%; background: #2b2f38; font-size: 13px; line-height: 18px; text-align: center; }
.peek { width: 1px; height: 50px; background: #5a6478; margin-right: 5px; }
.watermark { position: absolute; left: 54px; bottom: 37px; pointer-events: none; }
```
